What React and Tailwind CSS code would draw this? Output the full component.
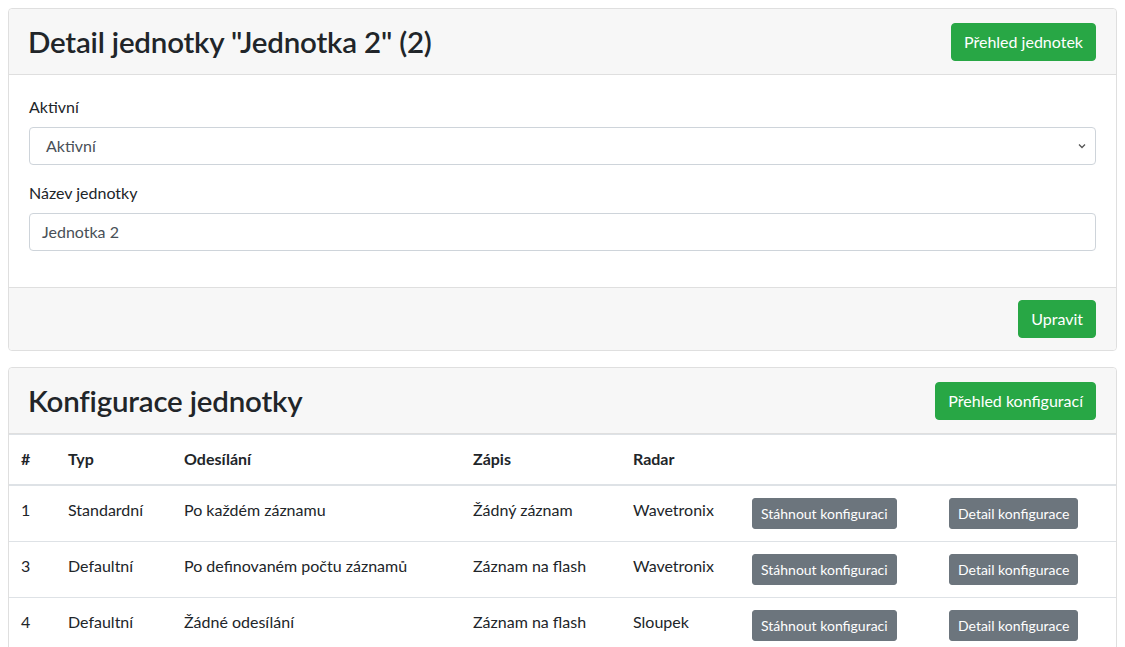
const rows = [
  { id: 1, typ: 'Standardní', odesilani: 'Po každém záznamu', zapis: 'Žádný záznam', radar: 'Wavetronix' },
  { id: 3, typ: 'Defaultní', odesilani: 'Po definovaném počtu záznamů', zapis: 'Záznam na flash', radar: 'Wavetronix' },
  { id: 4, typ: 'Defaultní', odesilani: 'Žádné odesílání', zapis: 'Záznam na flash', radar: 'Sloupek' },
];

function GreenButton({ children }) {
  return (
    <button className="h-[38px] px-3 rounded-[4px] bg-[#28a745] border border-[#28a745] text-white text-base leading-6">
      {children}
    </button>
  );
}

function SmallButton({ children }) {
  return (
    <button className="h-[31px] px-2 rounded-[3px] bg-[#6c757d] border border-[#6c757d] text-white text-sm leading-[21px] whitespace-nowrap">
      {children}
    </button>
  );
}

function CardHeader({ title, action }) {
  return (
    <div className="h-[66px] flex items-center justify-between px-5 bg-[#f7f7f7] border-b border-[#dfdfdf] rounded-t-[4px]">
      <h2 className="text-[29.5px] leading-[38px] font-semibold tracking-[-0.2px] text-[#212529] -ml-[1px]">{title}</h2>
      <GreenButton>{action}</GreenButton>
    </div>
  );
}

export default function App() {
  return (
    <div className="p-2 bg-white min-h-screen text-[#212529] text-base" style={{ fontFamily: 'Lato, sans-serif' }}>
      {/* Detail jednotky */}
      <div className="border border-[#dfdfdf] rounded-[4px] mb-4">
        <CardHeader title={'Detail jednotky "Jednotka 2" (2)'} action="Přehled jednotek" />
        <div className="px-5 pt-5 pb-1">
          <div className="mb-4">
            <label className="block mb-2 leading-6">Aktivní</label>
            <div className="h-[38px] flex items-center justify-between pl-4 pr-2 border border-[#ced4da] rounded-[4px] text-[#495057]">
              <span>Aktivní</span>
              <svg width="10" height="10" viewBox="0 0 10 10" fill="none" stroke="#555" strokeWidth="1.3">
                <path d="M2 3.5 5 6.5 8 3.5" />
              </svg>
            </div>
          </div>
          <div className="mb-4">
            <label className="block mb-2 leading-6">Název jednotky</label>
            <div className="h-[38px] flex items-center px-3 border border-[#ced4da] rounded-[4px] text-[#495057]">
              Jednotka 2
            </div>
          </div>
          <div className="h-4" />
        </div>
        <div className="h-[63px] flex items-center justify-end px-5 bg-[#f7f7f7] border-t border-[#dfdfdf] rounded-b-[4px]">
          <GreenButton>Upravit</GreenButton>
        </div>
      </div>

      {/* Konfigurace jednotky */}
      <div className="border border-[#dfdfdf] rounded-[4px]">
        <CardHeader title="Konfigurace jednotky" action="Přehled konfigurací" />
        <table className="w-full table-fixed border-collapse">
          <colgroup>
            <col className="w-[47px]" />
            <col className="w-[116px]" />
            <col className="w-[289px]" />
            <col className="w-[160px]" />
            <col className="w-[119px]" />
            <col className="w-[197px]" />
            <col />
          </colgroup>
          <thead>
            <tr className="border-t border-b-2 border-[#dee2e6]">
              {['#', 'Typ', 'Odesílání', 'Zápis', 'Radar', '', ''].map((h, i) => (
                <th key={i} className="pt-3 pb-[13px] px-3 text-left font-bold leading-6 align-bottom">{h}</th>
              ))}
            </tr>
          </thead>
          <tbody>
            {rows.map((r) => (
              <tr key={r.id} className="border-b border-[#dee2e6]">
                <td className="p-3 align-top leading-6">{r.id}</td>
                <td className="p-3 align-top leading-6">{r.typ}</td>
                <td className="p-3 align-top leading-6">{r.odesilani}</td>
                <td className="p-3 align-top leading-6">{r.zapis}</td>
                <td className="p-3 align-top leading-6">{r.radar}</td>
                <td className="p-3 align-top"><SmallButton>Stáhnout konfiguraci</SmallButton></td>
                <td className="p-3 align-top"><SmallButton>Detail konfigurace</SmallButton></td>
              </tr>
            ))}
          </tbody>
        </table>
      </div>
    </div>
  );
}
